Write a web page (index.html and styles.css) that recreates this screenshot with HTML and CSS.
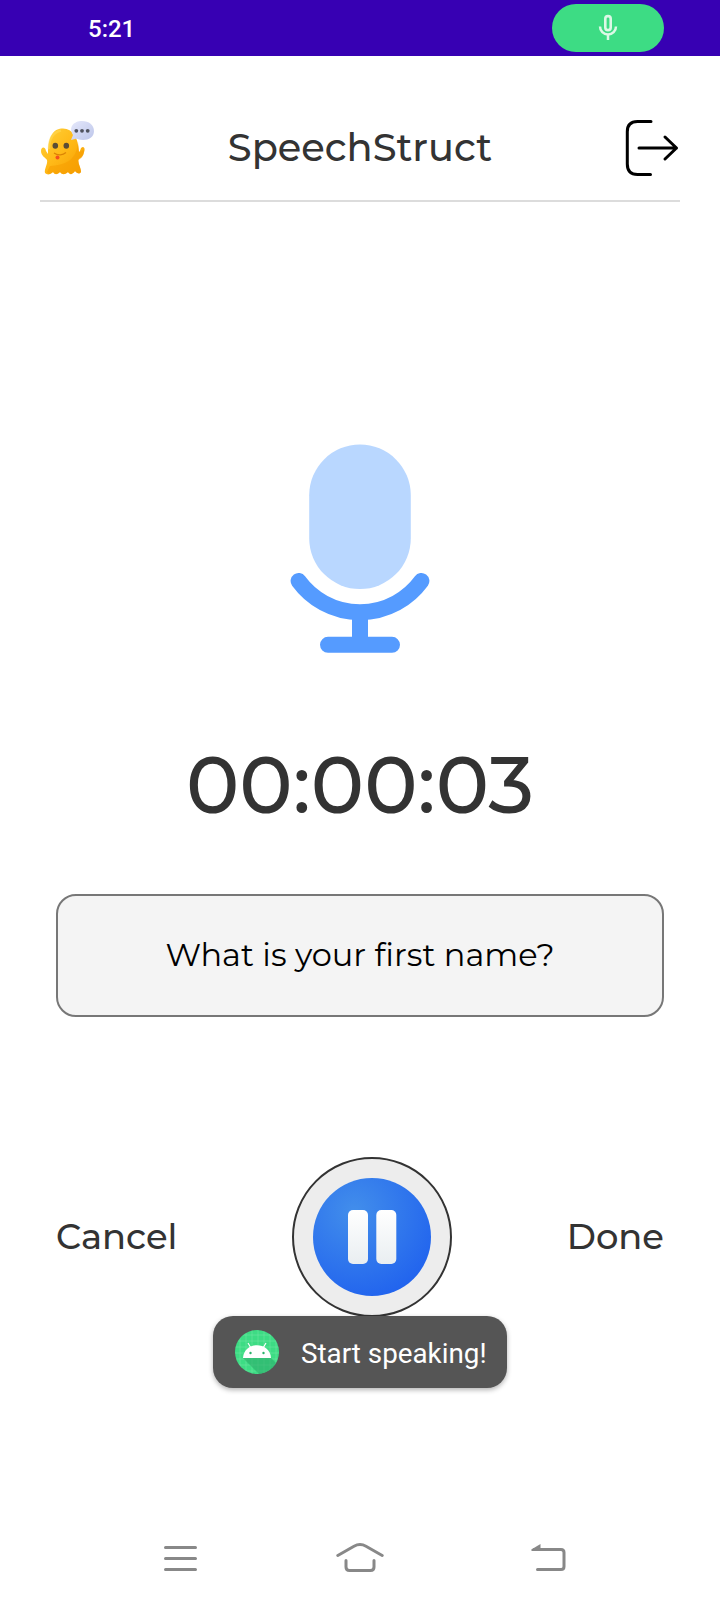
FILE: index.html
```html
<!DOCTYPE html>
<html lang="en">
<head>
<meta charset="utf-8">
<title>SpeechStruct</title>
<link rel="stylesheet" href="styles.css">
</head>
<body>
<div class="statusbar">
  <span class="clock">5:21</span>
  <span class="mic-pill">
    <svg width="20" height="28" viewBox="0 0 20 28" fill="none" stroke="#dcf8e6"><rect x="7.3" y="3.1" width="5.4" height="14" rx="2.7" stroke-width="2.6"/><path d="M2 13.500a8 8 0 0 0 16 0M10 22v5" stroke-width="2.500"/></svg>
  </span>
</div>
<header class="header">
  <svg class="ghost" width="54" height="56" viewBox="0 0 54 56">
    <defs>
      <linearGradient id="body" x1="0" y1="0" x2="1" y2="1"><stop offset="0" stop-color="#ffd13a"/><stop offset=".5" stop-color="#ffb917"/><stop offset="1" stop-color="#f59c00"/></linearGradient>
      <linearGradient id="bubble" x1="0" y1="0" x2="1" y2="1"><stop offset="0" stop-color="#e5e8fb"/><stop offset="1" stop-color="#bdc6ea"/></linearGradient>
    </defs>
    <path d="M7 34C7 15 13 8.500 22 8.500C32 9 37 17 38 32C40 31 39 27 42 27C45 28 43 32 42.500 34C41 38 38 38 37.500 40C37 45 40 47 40 52C38 55 36 53 34 51C31 55 29 55 27 52C24 55 21 55 19 52C16 55 14 55 12 52C9 55 6 55 4 53C3 49 7 44 6 40C5 38 0 36 0 31C0 27 4 26 5 31Z" fill="url(#body)"/>
    <path d="M37 22C36 38 27 45 9 46L6 52C8 55 10 54 12 52C14 55 17 54 19 52C22 55 24 54 27 52C29 55 32 54 34 51C36 54 40 54 40 51L37 40C42 38 43 34 43 30L38 32Z" fill="#f59c00" opacity=".55"/>
    <path d="M8 29C8 18 13 12 20 10.500" stroke="#ffdc5b" stroke-width="2.500" fill="none" opacity=".5"/>
    <ellipse cx="14.300" cy="25.700" rx="2.800" ry="3" fill="#5b4d35"/><ellipse cx="25.300" cy="25.700" rx="2.800" ry="3" fill="#5b4d35"/>
    <path d="M13 33C17 36 22 35 25 32.500" fill="none" stroke="#dc8505" stroke-width="1.200"/>
    <circle cx="16.500" cy="37.500" r="2" fill="#f4511e"/>
    <path d="M30 20L32 15C27 7 33 1 41 1C48 1 53 5 53 11C53 17 48 20 42 20C38 20 36 18 34 19Z" fill="url(#bubble)"/>
    <g fill="#50535f"><circle cx="35.300" cy="10.800" r="1.900"/><circle cx="41" cy="10.800" r="1.900"/><circle cx="46.700" cy="10.800" r="1.900"/></g>
  </svg>
  <h1 class="title">SpeechStruct</h1>
  <svg width="54" height="58" viewBox="0 0 54 58" fill="none" stroke="#000" stroke-width="3" stroke-linecap="round" stroke-linejoin="round"><path d="M26 2.500H12.500Q2.300 2.500 2.300 12.700V45Q2.300 55.500 12.500 55.500H25.500M14 29H51.500M40 18L51.500 29L40 40"/></svg>
</header>
<main class="recorder">
  <svg class="microphone" width="140" height="212" viewBox="0 0 140 212">
    <rect x="19.200" y="2.500" width="101.600" height="144.500" rx="50.800" fill="#b9d7ff"/>
    <g fill="none" stroke="#559bff" stroke-width="16" stroke-linecap="round"><path d="M8.600 139A76 76 0 0 0 131.400 139M38 202.800H102"/><path d="M70 172V202" stroke-linecap="butt"/></g>
  </svg>
  <div class="timer">00:00:03</div>
  <section class="question">What is your first name?</section>
  <div class="controls">
    <span class="action">Cancel</span>
    <button class="pause" aria-label="Pause">
      <svg width="120" height="120" viewBox="0 0 120 120">
        <defs><radialGradient id="blue" cx=".35" cy=".28" r=".78"><stop offset="0" stop-color="#428eeb"/><stop offset="1" stop-color="#2163ee"/></radialGradient><linearGradient id="bar" x2="0" y2="1"><stop offset="0" stop-color="#fff"/><stop offset="1" stop-color="#e9eef1"/></linearGradient></defs>
        <circle cx="60" cy="60" r="59" fill="url(#blue)"/><rect x="36" y="33" width="20" height="54" rx="5" fill="url(#bar)"/><rect x="64.300" y="33" width="20" height="54" rx="5" fill="url(#bar)"/>
      </svg>
    </button>
    <span class="action">Done</span>
  </div>
  <div class="toast">
    <svg width="44" height="44" viewBox="0 0 44 44">
      <defs><clipPath id="disc"><circle cx="22" cy="22" r="22"/></clipPath></defs>
      <g clip-path="url(#disc)"><path d="M0 0H44V44H0Z" fill="#3ddc84"/><path d="M5 0V44M11 0V44M17 0V44M23 0V44M29 0V44M35 0V44M41 0V44M0 5H44M0 11H44M0 17H44M0 23H44M0 29H44M0 35H44M0 41H44" stroke="#6be5a1" stroke-width=".6"/><path d="M8 28L24 44H44V36L35 27Z" fill="#2bab69" opacity=".6"/></g>
      <path d="M8 28C9 11 35 11 36 28Z" fill="#fff"/><path d="M16 18L13 13M28 18L31 13" stroke="#fff" stroke-width="1.200"/><circle cx="15.500" cy="23" r="1.200" fill="#2bb36c"/><circle cx="28.500" cy="23" r="1.200" fill="#2bb36c"/>
    </svg>
    <span>Start speaking!</span>
  </div>
</main>
<nav class="navbar">
  <svg width="33" height="32" viewBox="0 0 33 32"><path d="M1.500 5.500H31.500M1.500 16.500H31.500M1.500 27.500H31.500"/></svg>
  <svg width="48" height="32" viewBox="0 0 48 32"><path d="M1.800 13.500L18 4.200Q24 .8 30 4.200L46.200 13.500M10 18.500V25Q10 28.500 13.500 28.500H34.500Q38 28.500 38 25V18.500"/></svg>
  <svg width="35" height="32" viewBox="0 0 35 32"><path d="M3 7.500H30Q33 7.500 33 10.500V24.500Q33 27.500 30 27.500H6.500"/><path class="tip" d="M.3 7.500L9.500 2V9H1Q0 8.500 .3 7.500Z"/></svg>
</nav>
</body>
</html>
```
FILE: styles.css
```css
* { box-sizing: border-box; }
body { margin: 0; width: 720px; height: 1600px; display: flex; flex-direction: column; background: #fff; overflow: hidden; font-family: Montserrat, Inter, sans-serif; }
svg { display: block; flex: none; }
.statusbar { height: 56px; display: flex; justify-content: space-between; align-items: center; padding: 0 56px 0 88px; background: #3700b3; }
.clock { padding-top: 2px; font: 500 24px/28px Roboto, sans-serif; color: #fff; }
.mic-pill { width: 112px; height: 48px; border-radius: 24px; background: #3ddc84; display: flex; align-items: center; justify-content: center; padding-bottom: 3px; }
.header { margin: 56px 40px 0; height: 90px; padding: 7px 1px 0; display: flex; justify-content: space-between; align-items: flex-start; border-bottom: 2px solid #dcdcdc; }
.ghost { margin-top: 1px; }
.title { margin: 0; font-size: 38.4px; line-height: 58px; font-weight: 500; color: #333; }
.recorder { flex: 1; display: flex; flex-direction: column; align-items: center; padding: 240px 56px 0; }
.timer { margin-top: 91px; height: 80px; line-height: 80px; font-size: 80px; font-weight: 500; color: #333; }
.question { margin-top: 69px; width: 608px; height: 123px; padding-bottom: 2px; border: 2px solid #777; border-radius: 20px; background: #f4f4f4; display: flex; align-items: center; justify-content: center; font-size: 32px; font-weight: 400; color: #000; }
.controls { margin-top: 140px; width: 608px; display: flex; align-items: center; justify-content: space-between; }
.action { padding-bottom: 2px; font-size: 35.300px; font-weight: 500; color: #333; }
.pause { width: 160px; height: 160px; padding: 0; border: 2px solid #333; border-radius: 50%; background: #ededed; display: flex; align-items: center; justify-content: center; }
.toast { position: relative; margin-top: -1px; width: 294px; height: 72px; border-radius: 20px; background: #555; box-shadow: 0 2px 5px rgba(0,0,0,.3); display: flex; align-items: center; gap: 22px; padding-left: 22px; color: #fff; font: 400 27.800px/36px Roboto, sans-serif; white-space: nowrap; }
.toast span { padding-top: 4px; }
.navbar { height: 84px; display: flex; gap: 140px; align-items: center; padding: 0 0 0 164px; }
.navbar svg:nth-child(2) { margin-left: -1px; }
.navbar svg:last-child { margin-left: 7px; }
.navbar path { fill: none; stroke: #888; stroke-width: 3; stroke-linecap: round; stroke-linejoin: round; }
.navbar .tip { fill: #888; stroke: none; }
```
